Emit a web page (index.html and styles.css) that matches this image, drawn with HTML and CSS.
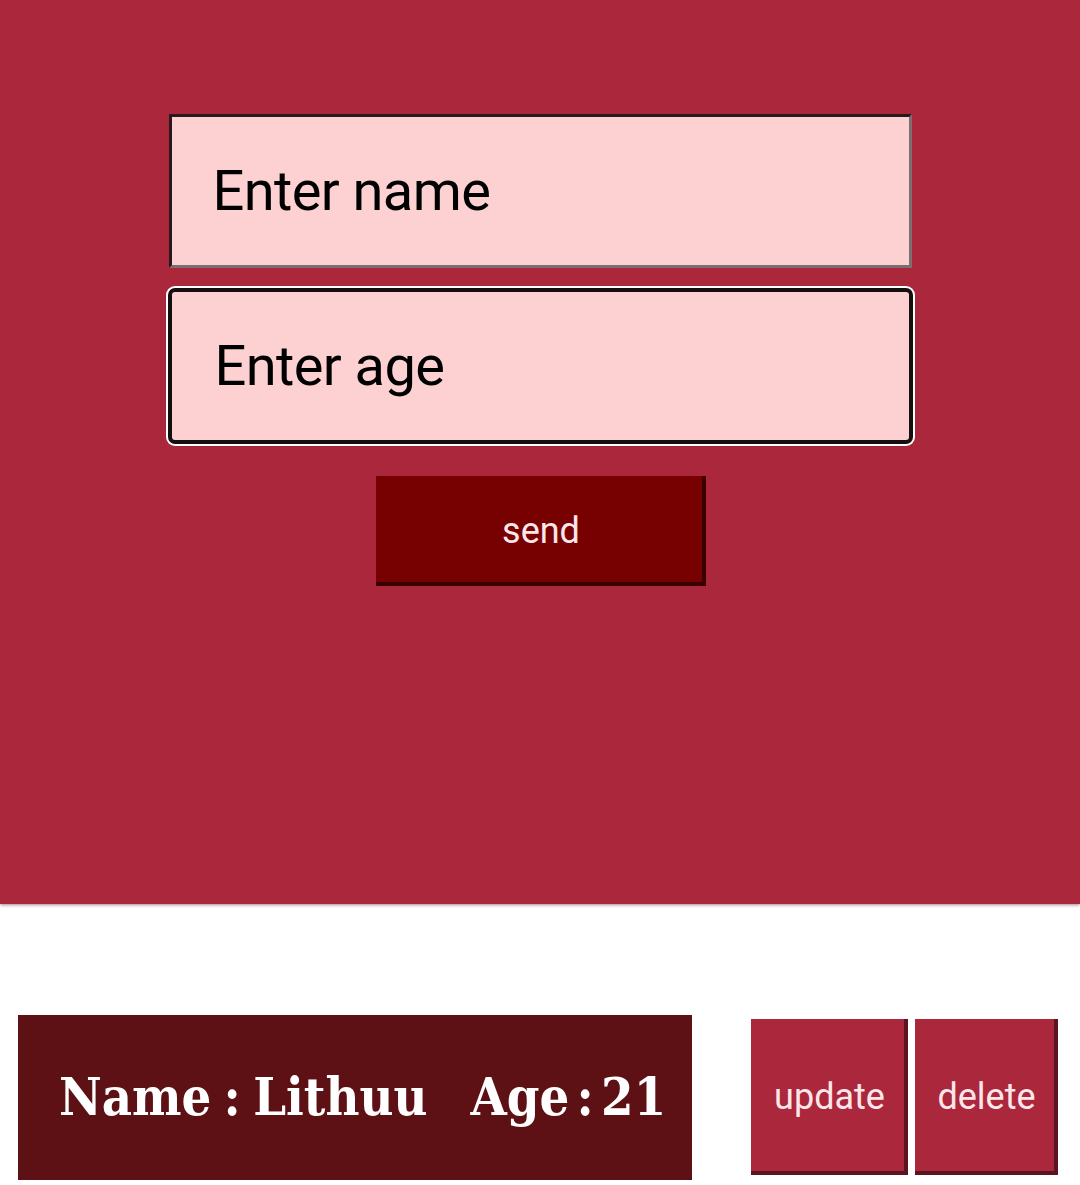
FILE: index.html
```html
<!DOCTYPE html>
<html>
<head>
<meta charset="utf-8">
<link rel="stylesheet" href="styles.css">
</head>
<body>
<section class="form-area">
  <input class="field" type="text" placeholder="Enter name">
  <input class="field field-focus" type="text" placeholder="Enter age">
  <button class="send">send</button>
</section>
<section class="list">
  <div class="card">
    <span class="card-text">Name : Lithuu</span>
    <span class="card-text card-age">Age : 21</span>
  </div>
  <div class="actions">
    <button class="act">update</button>
    <button class="act">delete</button>
  </div>
</section>
</body>
</html>
```
FILE: styles.css
```css
html, body {
  margin: 0;
  padding: 0;
  background: #ffffff;
}
body {
  width: 1080px;
  height: 1185px;
  overflow: hidden;
  font-family: Roboto, "Liberation Sans", sans-serif;
}
.form-area {
  height: 904px;
  box-sizing: border-box;
  background: #ab273c;
  padding-top: 114px;
  display: flex;
  flex-direction: column;
  align-items: center;
  box-shadow: 0 1px 3px rgba(80, 20, 30, 0.5);
}
.field {
  box-sizing: border-box;
  width: 743px;
  height: 154px;
  margin: 0;
  background: #fdd1d1;
  border: 3px solid;
  border-color: #2a181d #7d6c70 #7d6c70 #2a181d;
  padding: 0 0 0 41px;
  font-family: Roboto, sans-serif;
  font-size: 56px;
  letter-spacing: -0.6px;
  color: #000;
  outline: none;
}
.field::placeholder {
  color: #000;
  opacity: 1;
}
.field-focus {
  margin-top: 20px;
  width: 745px;
  height: 156px;
  border: 4px solid #150f10;
  border-radius: 7px;
  box-shadow: 0 0 0 2px #ffffff;
  padding-left: 43px;
}
.send {
  margin: 32px 0 0 2px;
  width: 330px;
  height: 110px;
  box-sizing: border-box;
  background: #770000;
  border: none;
  box-shadow: inset -4px -4px 0 #3a0000;
  color: #fde6ea;
  font-family: Roboto, sans-serif;
  font-size: 36px;
  padding: 0;
}
.list {
  display: flex;
  align-items: flex-start;
  padding: 111px 0 0 18px;
}
.card {
  width: 674px;
  height: 165px;
  box-sizing: border-box;
  background: #5e1114;
  display: flex;
  align-items: center;
  gap: 43px;
  padding: 0 0 2px 41px;
}
.card-text {
  font-family: "DejaVu Serif", serif;
  font-stretch: condensed;
  font-weight: bold;
  font-size: 52px;
  word-spacing: -4px;
  color: #ffffff;
  white-space: nowrap;
}
.card-age {
  word-spacing: -9px;
}
.actions {
  display: flex;
  gap: 7px;
  margin: 4px 0 0 59px;
}
.act {
  height: 156px;
  box-sizing: border-box;
  background: #ab273c;
  border: none;
  box-shadow: inset -4px -4px 0 #5a1520;
  color: #fde6ea;
  font-family: Roboto, sans-serif;
  font-size: 36px;
  padding: 0;
}
.act:first-child { width: 157px; }
.act:last-child { width: 143px; }
```
